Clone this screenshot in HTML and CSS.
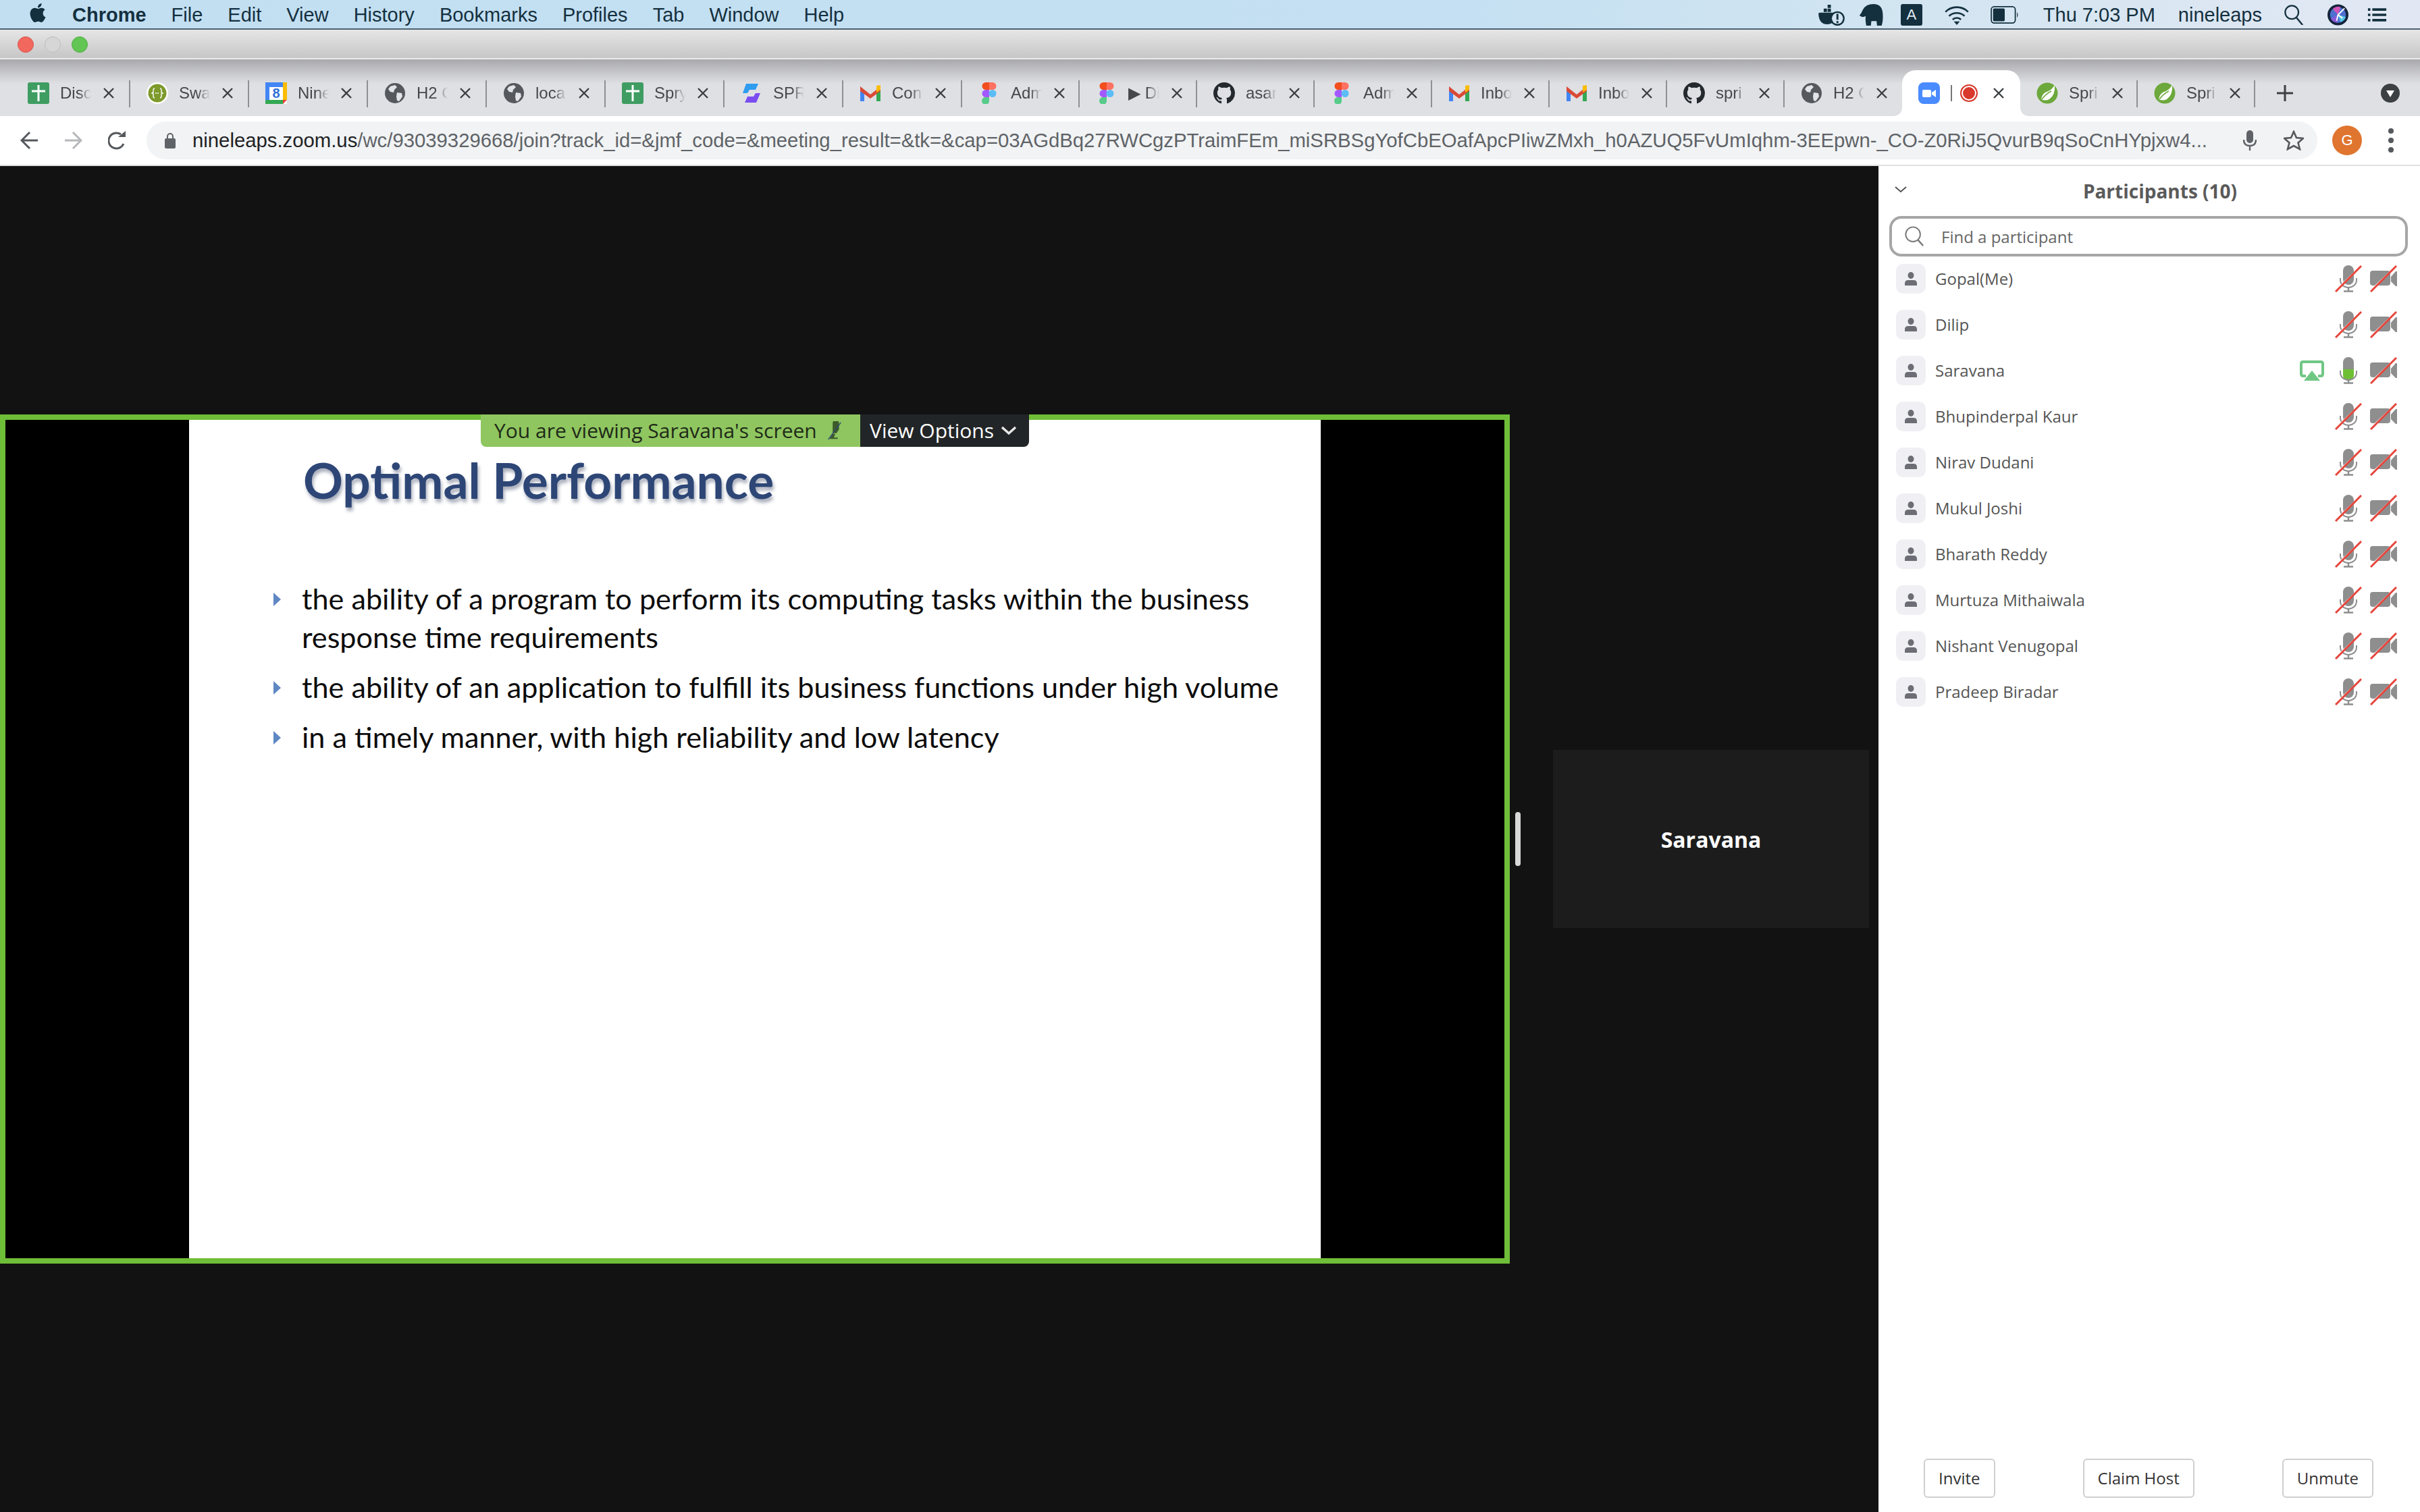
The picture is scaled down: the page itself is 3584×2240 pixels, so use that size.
FILE: index.html
```html
<!DOCTYPE html>
<html lang="en">
<head>
    <meta charset="UTF-8">
    <title>Zoom meeting</title>
    <link rel="stylesheet" href="styles.css">
</head>
<body>
    <svg class="defs" width="0" height="0">
        <symbol id="fav-sheet" viewBox="0 0 32 32"><rect width="32" height="32" rx="3" fill="#3f9d62"/><path d="M16 4v24M6 13h20" stroke="#fff" stroke-width="3"/></symbol>
        <symbol id="fav-swagger" viewBox="0 0 32 32"><circle cx="16" cy="16" r="16" fill="#fff"/><circle cx="16" cy="16" r="13.5" fill="#7d9a2b"/><path d="M12 9q-2 0-2 3v3l-2 1 2 1v3q0 3 2 3M20 9q2 0 2 3v3l2 1-2 1v3q0 3-2 3" fill="none" stroke="#fff" stroke-width="1.4"/><path d="M13 16h6" stroke="#fff" stroke-width="1.6" stroke-dasharray="2 1"/></symbol>
        <symbol id="fav-globe" viewBox="0 0 32 32"><circle cx="16" cy="16" r="15" fill="#55585c"/><path d="M9 6l7-2 3 3-4 4-1 4-5-1-3-4zM19 15l7 1 1 5-5 7-3-1-1-6z" fill="#e3e4e7"/></symbol>
        <symbol id="fav-spr" viewBox="0 0 32 32"><path d="M8 2h18l-4 9H13l-3 5H3z" fill="#2f9cf0"/><path d="M29 16l-6 14H6l4-9h9l3-5z" fill="#7b4df0"/></symbol>
        <symbol id="fav-gmail" viewBox="0 0 32 32"><path d="M1 6v22h6V14z" fill="#4285f4"/><path d="M31 6v22h-6V14z" fill="#34a853"/><path d="M1 6l15 12L31 6v7L16 24 1 13z" fill="#d94b37"/><path d="M25 5l6-1v7l-6 4z" fill="#fbbc04"/></symbol>
        <symbol id="fav-figma" viewBox="0 0 32 32"><path d="M11 0h5v11h-5a5.500 5.500 0 010-11z" fill="#f24e1e"/><path d="M16 0h5a5.500 5.500 0 010 11h-5z" fill="#ff7262"/><path d="M11 11h5v11h-5a5.500 5.500 0 010-11z" fill="#a259ff"/><circle cx="21" cy="16.500" r="5.500" fill="#5cbcf6"/><path d="M11 22h5v5a5.500 5.500 0 11-5-5z" fill="#57cb8a"/></symbol>
        <symbol id="fav-github" viewBox="0 0 16 16"><path fill="#24292e" d="M8 0C3.58 0 0 3.58 0 8c0 3.54 2.29 6.53 5.47 7.59.4.07.55-.17.55-.38 0-.19-.01-.82-.01-1.49-2.01.37-2.53-.49-2.69-.94-.09-.23-.48-.94-.82-1.13-.28-.15-.68-.52-.01-.53.63-.01 1.08.58 1.23.82.72 1.21 1.87.87 2.33.66.07-.52.28-.87.51-1.07-1.78-.2-3.64-.89-3.64-3.95 0-.87.31-1.59.82-2.15-.08-.2-.36-1.02.08-2.12 0 0 .67-.21 2.2.82.64-.18 1.32-.27 2-.27.68 0 1.36.09 2 .27 1.53-1.04 2.2-.82 2.2-.82.44 1.1.16 1.92.08 2.12.51.56.82 1.27.82 2.15 0 3.07-1.87 3.75-3.65 3.95.29.25.54.73.54 1.48 0 1.07-.01 1.93-.01 2.2 0 .21.15.46.55.38A8.013 8.013 0 0016 8c0-4.42-3.58-8-8-8z"/></symbol>
        <symbol id="fav-zoom" viewBox="0 0 32 32"><rect width="32" height="32" rx="8" fill="#4a8cff"/><rect x="6" y="11" width="13" height="11" rx="2" fill="#fff"/><path d="M20 15l6-4v11l-6-4z" fill="#fff"/></symbol>
        <symbol id="fav-spring" viewBox="0 0 32 32"><circle cx="16" cy="16" r="15.500" fill="#6ca83c"/><path d="M27 4q1 15-8 21-6 3-12 0 1-8 8-11 7-2 12-10z" fill="#fff"/><path d="M8 25q6-8 14-12" stroke="#6ca83c" stroke-width="1.500" fill="none"/></symbol>
        <symbol id="tab-x" viewBox="0 0 18 18"><path d="M2 2l14 14M16 2L2 16" stroke="#3c4043" stroke-width="2.400"/></symbol>
        <symbol id="mic-off" viewBox="0 0 40 40"><rect x="12" y="0" width="16" height="29" rx="8" fill="#8e8e8e"/><path d="M8 19v3a12 11 0 0024 0v-3" fill="none" stroke="#8e8e8e" stroke-width="2"/><path d="M20 33v5M13 38.500h14" stroke="#8e8e8e" stroke-width="2.500"/><path d="M3 35L37 3" stroke="#fff" stroke-width="2"/><path d="M1 39L39 1" stroke="#e5453c" stroke-width="3"/></symbol>
        <symbol id="mic-on" viewBox="0 0 40 40"><path d="M12 8a8 8 0 0116 0v10H12z" fill="#8e8e8e"/><path d="M12 18h16v9a8 8 0 01-16 0z" fill="#6fbf35"/><path d="M8 20v3a12 11 0 0024 0v-3" fill="none" stroke="#8e8e8e" stroke-width="2"/><path d="M20 34v4M13 38.500h14" stroke="#8e8e8e" stroke-width="2.500"/></symbol>
        <symbol id="cam-off" viewBox="0 0 40 40"><rect x="0" y="8" width="30" height="22" rx="4" fill="#8e8e8e"/><path d="M31 17l7-8h2v22h-2l-7-7z" fill="#8e8e8e"/><path d="M3 35L37 3" stroke="#fff" stroke-width="2"/><path d="M1 39L39 1" stroke="#e5453c" stroke-width="3"/></symbol>
        <symbol id="person" viewBox="0 0 18 20"><ellipse cx="9" cy="5" rx="4.500" ry="5" fill="#6d6d75"/><path d="M0 20v-3q0-5 5-5h8q5 0 5 5v3z" fill="#6d6d75"/></symbol>
    </svg>

    <header class="menubar">
        <svg class="apple" viewBox="0 0 24 24"><path fill="#14303f" d="M12.152 6.896c-.948 0-2.415-1.078-3.960-1.040-2.040.027-3.910 1.183-4.961 3.014-2.117 3.675-.546 9.103 1.519 12.090 1.013 1.454 2.208 3.090 3.792 3.039 1.520-.065 2.090-.987 3.935-.987 1.831 0 2.350.987 3.960.948 1.637-.026 2.676-1.480 3.676-2.948 1.156-1.688 1.636-3.325 1.662-3.415-.039-.013-3.182-1.221-3.220-4.857-.026-3.040 2.480-4.494 2.597-4.559-1.429-2.090-3.623-2.324-4.390-2.376-2-.156-3.675 1.090-4.610 1.090zM15.530 3.830c.843-1.012 1.400-2.427 1.245-3.830-1.207.052-2.662.805-3.532 1.818-.780.896-1.454 2.338-1.273 3.714 1.338.104 2.715-.688 3.559-1.701"/></svg>
        <nav class="menu">
            <span class="menu-app">Chrome</span>
            <span>File</span><span>Edit</span><span>View</span><span>History</span><span>Bookmarks</span><span>Profiles</span><span>Tab</span><span>Window</span><span>Help</span>
        </nav>
        <div class="status">
            <svg class="st-docker" viewBox="0 0 40 32"><path fill="#14303f" d="M8 6h5v5H8zM14 6h5v5h-5zM14 0h5v5h-5zM2 12h24q2 0 1 3-1 15-14 15Q1 30 0 14q0-2 2-2z"/><circle cx="29" cy="21" r="11" fill="#14303f"/><circle cx="29" cy="21" r="8.500" fill="#d2e4f1"/><path d="M29 14v9M29 25v3" stroke="#14303f" stroke-width="3"/></svg>
            <svg class="st-elephant" viewBox="0 0 42 38"><path fill="#14303f" d="M0 20q3-3 6-10Q11 0 25 0q15 0 16 17 1 12-2 21h-8l-1-8h-9l-1 8H12q-2-10-1-17-6 4-11-1z"/></svg>
            <div class="st-key">A</div>
            <svg class="st-wifi" viewBox="0 0 42 34"><path d="M2 12a27 27 0 0138 0M8 19a19 19 0 0126 0M14 25a10 10 0 0114 0" fill="none" stroke="#14303f" stroke-width="3"/><path d="M21 34l-5-6h10z" fill="#14303f"/></svg>
            <svg class="st-battery" viewBox="0 0 48 30"><rect x="1" y="1" width="41" height="28" rx="5" fill="none" stroke="#14303f" stroke-width="2"/><rect x="4" y="4" width="20" height="22" rx="2" fill="#14303f"/><path d="M45 10q3 5 0 10z" fill="#14303f"/></svg>
            <span class="st-time">Thu 7:03 PM</span>
            <span class="st-user">nineleaps</span>
            <svg class="st-search" viewBox="0 0 30 32"><circle cx="12" cy="12" r="10.500" fill="none" stroke="#14303f" stroke-width="2.400"/><path d="M19 20l10 12" stroke="#14303f" stroke-width="2.600"/></svg>
            <svg class="st-siri" viewBox="0 0 32 32"><circle cx="16" cy="16" r="16" fill="#14243c"/><circle cx="16" cy="16" r="12" fill="#4c6fd0"/><path d="M16 16L8 7a12 12 0 0 1 12-3z" fill="#d055b8"/><path d="M16 16l12 3a12 12 0 0 1-8 8z" fill="#52c6e8"/><path d="M16 16L5 22a12 12 0 0 0 10 6z" fill="#8a5ad8"/><path d="M16 16L26 6M16 16l7 5M16 16l-2 9" stroke="#fff" stroke-width="2"/></svg>
            <svg class="st-list" viewBox="0 0 38 28"><path d="M0 3h5M9 3h29M0 14h5M9 14h29M0 25h5M9 25h29" stroke="#14303f" stroke-width="5"/></svg>
        </div>
    </header>

    <div class="titlebar">
        <span class="light light-red"></span>
        <span class="light light-grey"></span>
        <span class="light light-green"></span>
    </div>

    <div class="tabstrip">
        <div class="tab wide"><svg class="fav"><use href="#fav-sheet"/></svg><span class="tab-title">Disc</span><svg class="tab-close"><use href="#tab-x"/></svg></div>
        <div class="tab wide"><svg class="fav"><use href="#fav-swagger"/></svg><span class="tab-title">Swa</span><svg class="tab-close"><use href="#tab-x"/></svg></div>
        <div class="tab wide">
            <svg class="fav" viewBox="0 0 32 32"><rect width="32" height="32" fill="#fff"/><path d="M0 0h26v7H0z" fill="#4285f4"/><path d="M26 0h6v26h-6z" fill="#fbbc04"/><path d="M0 7h6v19H0z" fill="#4285f4"/><path d="M0 26h26v6H0z" fill="#34a853"/><path d="M26 26h6l-6 6z" fill="#ea4335"/><text x="16" y="23" class="cal-num">8</text></svg>
            <span class="tab-title">Nine</span><svg class="tab-close"><use href="#tab-x"/></svg></div>
        <div class="tab wide"><svg class="fav"><use href="#fav-globe"/></svg><span class="tab-title">H2 C</span><svg class="tab-close"><use href="#tab-x"/></svg></div>
        <div class="tab wide"><svg class="fav"><use href="#fav-globe"/></svg><span class="tab-title">loca</span><svg class="tab-close"><use href="#tab-x"/></svg></div>
        <div class="tab wide"><svg class="fav"><use href="#fav-sheet"/></svg><span class="tab-title">Spry</span><svg class="tab-close"><use href="#tab-x"/></svg></div>
        <div class="tab wide"><svg class="fav"><use href="#fav-spr"/></svg><span class="tab-title">SPR</span><svg class="tab-close"><use href="#tab-x"/></svg></div>
        <div class="tab wide"><svg class="fav"><use href="#fav-gmail"/></svg><span class="tab-title">Cont</span><svg class="tab-close"><use href="#tab-x"/></svg></div>
        <div class="tab"><svg class="fav"><use href="#fav-figma"/></svg><span class="tab-title">Adm</span><svg class="tab-close"><use href="#tab-x"/></svg></div>
        <div class="tab"><svg class="fav"><use href="#fav-figma"/></svg><span class="tab-title">▶ Di</span><svg class="tab-close"><use href="#tab-x"/></svg></div>
        <div class="tab"><svg class="fav"><use href="#fav-github"/></svg><span class="tab-title">asar</span><svg class="tab-close"><use href="#tab-x"/></svg></div>
        <div class="tab"><svg class="fav"><use href="#fav-figma"/></svg><span class="tab-title">Adm</span><svg class="tab-close"><use href="#tab-x"/></svg></div>
        <div class="tab"><svg class="fav"><use href="#fav-gmail"/></svg><span class="tab-title">Inbo</span><svg class="tab-close"><use href="#tab-x"/></svg></div>
        <div class="tab"><svg class="fav"><use href="#fav-gmail"/></svg><span class="tab-title">Inbo</span><svg class="tab-close"><use href="#tab-x"/></svg></div>
        <div class="tab"><svg class="fav"><use href="#fav-github"/></svg><span class="tab-title">spri</span><svg class="tab-close"><use href="#tab-x"/></svg></div>
        <div class="tab no-sep"><svg class="fav"><use href="#fav-globe"/></svg><span class="tab-title">H2 C</span><svg class="tab-close"><use href="#tab-x"/></svg></div>
        <div class="tab active">
            <svg class="fav"><use href="#fav-zoom"/></svg>
            <span class="tab-bar"></span>
            <span class="rec"></span>
            <svg class="tab-close"><use href="#tab-x"/></svg>
        </div>
        <div class="tab"><svg class="fav"><use href="#fav-spring"/></svg><span class="tab-title">Spri</span><svg class="tab-close"><use href="#tab-x"/></svg></div>
        <div class="tab"><svg class="fav"><use href="#fav-spring"/></svg><span class="tab-title">Spri</span><svg class="tab-close"><use href="#tab-x"/></svg></div>
        <svg class="new-tab" viewBox="0 0 26 26"><path d="M13 1v24M1 13h24" stroke="#3c4043" stroke-width="3"/></svg>
        <svg class="tab-search" viewBox="0 0 28 28"><circle cx="14" cy="14" r="14" fill="#3c4043"/><path d="M8 10h12l-6 10z" fill="#fff"/></svg>
    </div>

    <div class="toolbar">
        <div class="nav-btns">
            <svg class="nav-btn" viewBox="0 0 27 28"><path d="M26 14H3M14 2L2 14l12 12" fill="none" stroke="#55585c" stroke-width="3"/></svg>
            <svg class="nav-btn" viewBox="0 0 27 28"><path d="M1 14h23M13 2l12 12-12 12" fill="none" stroke="#b6b7ba" stroke-width="3"/></svg>
            <svg class="nav-btn" viewBox="0 0 27 28"><path d="M23 19A11.500 11.500 0 1119 5" fill="none" stroke="#55585c" stroke-width="3"/><path d="M15 9h11V0z" fill="#55585c"/></svg>
        </div>
        <div class="omnibox">
            <svg class="lock" viewBox="0 0 16 24"><path d="M4 10V6a4 4 0 018 0v4" fill="none" stroke="#5f6368" stroke-width="2"/><rect y="9" width="16" height="15" rx="2" fill="#5f6368"/></svg>
            <div class="url"><span class="url-host">nineleaps.zoom.us</span>/wc/93039329668/join?track_id=&amp;jmf_code=&amp;meeting_result=&amp;tk=&amp;cap=03AGdBq27RWCgzPTraimFEm_miSRBSgYofCbEOafApcPIiwZMxh_h0AZUQ5FvUmIqhm-3EEpwn-_CO-Z0RiJ5QvurB9qSoCnHYpjxw4...</div>
            <svg class="omni-mic" viewBox="0 0 20 30"><rect x="5" y="0" width="10" height="19" rx="5" fill="#5f6368"/><path d="M1 14q0 9 9 9t9-9M10 23v7" fill="none" stroke="#5f6368" stroke-width="2.400"/></svg>
            <svg class="omni-star" viewBox="0 0 30 30"><path d="M15 2l4 9 10 1-7.500 6.500L24 28l-9-5-9 5 2.500-9.500L1 12l10-1z" fill="none" stroke="#55585c" stroke-width="2.600"/></svg>
        </div>
        <div class="profile">G</div>
        <div class="dots"><span></span><span></span><span></span></div>
    </div>

    <main class="meeting">
        <section class="stage">
            <div class="video">
                <div class="banner">
                    <div class="banner-msg">You are viewing Saravana's screen
                        <svg class="banner-mic" viewBox="0 0 24 30"><path d="M9 3a5 5 0 0110 0v10l-4 6H9zM4 28l5-8h4l-2 6h6v2z" fill="#3d5a2a"/><path d="M2 29L22 2" stroke="#2b4a78" stroke-width="1.500"/></svg>
                    </div>
                    <div class="banner-opts">View Options
                        <svg class="banner-chev" viewBox="0 0 24 14"><path d="M2 2l10 9 10-9" fill="none" stroke="#e8e8e8" stroke-width="3.500"/></svg>
                    </div>
                </div>
                <div class="slide">
                    <h1 class="slide-title">Optimal Performance</h1>
                    <ul class="slide-list">
                        <li>the ability of a program to perform its computing tasks within the business response time requirements</li>
                        <li>the ability of an application to fulfill its business functions under high volume</li>
                        <li>in a timely manner, with high reliability and low latency</li>
                    </ul>
                </div>
            </div>
            <div class="handle"></div>
            <div class="thumb">Saravana</div>
        </section>

        <aside class="panel">
            <div class="panel-head">
                <svg class="panel-chev" viewBox="0 0 18 10"><path d="M1 1l8 7 8-7" fill="none" stroke="#555" stroke-width="2"/></svg>
                <span class="panel-title">Participants (10)</span>
            </div>
            <div class="search">
                <svg class="search-icon" viewBox="0 0 30 32"><circle cx="13" cy="13" r="11.500" fill="none" stroke="#777" stroke-width="2"/><path d="M21 22l8 9" stroke="#777" stroke-width="2.500"/></svg>
                <span>Find a participant</span>
            </div>
            <ul class="people">
                <li class="person"><span class="avatar"><svg><use href="#person"/></svg></span><span class="name">Gopal(Me)</span><svg class="ctl"><use href="#mic-off"/></svg><svg class="ctl"><use href="#cam-off"/></svg></li>
                <li class="person"><span class="avatar"><svg><use href="#person"/></svg></span><span class="name">Dilip</span><svg class="ctl"><use href="#mic-off"/></svg><svg class="ctl"><use href="#cam-off"/></svg></li>
                <li class="person"><span class="avatar"><svg><use href="#person"/></svg></span><span class="name">Saravana</span>
                    <svg class="share" viewBox="0 0 36 30"><path d="M9 23H5q-3 0-3-3V5q0-3 3-3h26q3 0 3 3v15q0 3-3 3h-4" fill="none" stroke="#6fc784" stroke-width="4"/><path d="M18 15l12 15H6z" fill="#6fc784"/></svg>
                    <svg class="ctl"><use href="#mic-on"/></svg><svg class="ctl"><use href="#cam-off"/></svg></li>
                <li class="person"><span class="avatar"><svg><use href="#person"/></svg></span><span class="name">Bhupinderpal Kaur</span><svg class="ctl"><use href="#mic-off"/></svg><svg class="ctl"><use href="#cam-off"/></svg></li>
                <li class="person"><span class="avatar"><svg><use href="#person"/></svg></span><span class="name">Nirav Dudani</span><svg class="ctl"><use href="#mic-off"/></svg><svg class="ctl"><use href="#cam-off"/></svg></li>
                <li class="person"><span class="avatar"><svg><use href="#person"/></svg></span><span class="name">Mukul Joshi</span><svg class="ctl"><use href="#mic-off"/></svg><svg class="ctl"><use href="#cam-off"/></svg></li>
                <li class="person"><span class="avatar"><svg><use href="#person"/></svg></span><span class="name">Bharath Reddy</span><svg class="ctl"><use href="#mic-off"/></svg><svg class="ctl"><use href="#cam-off"/></svg></li>
                <li class="person"><span class="avatar"><svg><use href="#person"/></svg></span><span class="name">Murtuza Mithaiwala</span><svg class="ctl"><use href="#mic-off"/></svg><svg class="ctl"><use href="#cam-off"/></svg></li>
                <li class="person"><span class="avatar"><svg><use href="#person"/></svg></span><span class="name">Nishant Venugopal</span><svg class="ctl"><use href="#mic-off"/></svg><svg class="ctl"><use href="#cam-off"/></svg></li>
                <li class="person"><span class="avatar"><svg><use href="#person"/></svg></span><span class="name">Pradeep Biradar</span><svg class="ctl"><use href="#mic-off"/></svg><svg class="ctl"><use href="#cam-off"/></svg></li>
            </ul>
            <div class="panel-foot">
                <button class="foot-btn">Invite</button>
                <button class="foot-btn">Claim Host</button>
                <button class="foot-btn">Unmute</button>
            </div>
        </aside>
    </main>
</body>
</html>
```

FILE: styles.css
```css
* {
    box-sizing: border-box;
}
html, body {
    margin: 0;
    padding: 0;
}
body {
    width: 3584px;
    height: 2240px;
    overflow: hidden;
    display: flex;
    flex-direction: column;
    font-family: "Liberation Sans", Arial, sans-serif;
    background: #121212;
}
.defs {
    position: absolute;
}

/* mac menu bar */
.menubar {
    height: 44px;
    flex: none;
    display: flex;
    align-items: center;
    padding: 2px 0 0 42px;
    border-bottom: 2px solid #4d6272;
    background: linear-gradient(90deg, #c2dff2 0%, #c4e0f2 60%, #d3e5f1 80%, #e2e8f3 100%);
    color: #14303f;
    font-size: 29px;
}
.apple {
    width: 28px;
    height: 34px;
    margin-top: -6px;
}
.menu {
    display: flex;
    gap: 37px;
    margin-left: 37px;
}
.menu-app {
    font-weight: bold;
}
.status {
    margin-left: auto;
    display: flex;
    align-items: center;
    padding-right: 45px;
}
.st-docker { width: 39px; height: 31px; }
.st-elephant { width: 41px; height: 32px; margin-left: 19px; }
.st-key {
    width: 32px;
    height: 32px;
    margin-left: 23px;
    border-radius: 3px;
    background: #14303f;
    color: #e0ecf4;
    font-size: 22px;
    line-height: 32px;
    text-align: center;
}
.st-wifi { width: 42px; height: 30px; margin-left: 30px; }
.st-battery { width: 48px; height: 26px; margin-left: 26px; }
.st-time { margin-left: 33px; }
.st-user { margin-left: 34px; }
.st-search { width: 30px; height: 30px; margin-left: 32px; }
.st-siri { width: 31px; height: 32px; margin-left: 35px; }
.st-list { width: 37px; height: 20px; margin-left: 24px; }

/* window title bar */
.titlebar {
    height: 44px;
    flex: none;
    display: flex;
    align-items: center;
    gap: 16px;
    padding: 2px 0 0 26px;
    background: linear-gradient(#e6e6e6, #c6c6c6);
    border-bottom: 2px solid #ececec;
}
.light {
    width: 24px;
    height: 24px;
    border-radius: 50%;
}
.light-red { background: #f2685f; border: 1px solid #d9534a; }
.light-grey { background: #d6d6d6; border: 1px solid #bdbdbd; }
.light-green { background: #62c554; border: 1px solid #4fae42; }

/* chrome tabs */
.tabstrip {
    height: 84px;
    flex: none;
    display: flex;
    align-items: flex-end;
    padding-left: 17px;
    background: linear-gradient(#a8a8ad 0, #dfe0e4 36px);
}
.tab {
    position: relative;
    width: 174px;
    height: 68px;
    flex: none;
    display: flex;
    align-items: center;
    padding-left: 24px;
}
.tab.wide {
    width: 176px;
}
.tab::after {
    content: "";
    position: absolute;
    right: 0;
    top: 15px;
    height: 40px;
    width: 2px;
    background: #8f9093;
}
.tab.no-sep::after {
    display: none;
}
.fav {
    width: 32px;
    height: 32px;
    flex: none;
}
.cal-num {
    font-size: 20px;
    font-weight: bold;
    fill: #2f6fd6;
    text-anchor: middle;
}
.tab-title {
    width: 46px;
    margin-left: 16px;
    white-space: nowrap;
    font-size: 24px;
    color: #45474a;
    -webkit-mask-image: linear-gradient(90deg, #000 60%, transparent);
    mask-image: linear-gradient(90deg, #000 60%, transparent);
}
.tab-close {
    width: 18px;
    height: 18px;
    flex: none;
    margin-left: 17px;
}
.tab.active {
    width: 175px;
    background: #fff;
    border-radius: 20px 20px 0 0;
}
.tab.active::before,
.tab.active::after {
    content: "";
    display: block;
    position: absolute;
    top: auto;
    bottom: 0;
    width: 12px;
    height: 12px;
}
.tab.active::before {
    left: -12px;
    background: radial-gradient(circle at 0 0, transparent 11.5px, #fff 12px);
}
.tab.active::after {
    right: -12px;
    background: radial-gradient(circle at 100% 0, transparent 11.5px, #fff 12px);
}
.tab-bar {
    width: 2px;
    height: 24px;
    margin-left: 16px;
    background: #777;
}
.rec {
    width: 26px;
    height: 26px;
    margin-left: 12px;
    border-radius: 50%;
    background: #d8392c;
    border: 2px solid #d8392c;
    box-shadow: inset 0 0 0 2px #fff;
}
.tab.active .tab-close {
    margin-left: 22px;
}
.new-tab {
    width: 26px;
    height: 26px;
    margin: 0 0 21px 31px;
}
.tab-search {
    width: 28px;
    height: 28px;
    margin: 0 30px 20px auto;
}

/* chrome toolbar */
.toolbar {
    height: 74px;
    flex: none;
    display: flex;
    align-items: center;
    padding-left: 30px;
    background: #fff;
    border-bottom: 2px solid #e0e0e0;
}
.nav-btns {
    display: flex;
    gap: 38px;
}
.nav-btn {
    width: 27px;
    height: 28px;
}
.omnibox {
    width: 3215px;
    height: 56px;
    margin-left: 30px;
    display: flex;
    align-items: center;
    padding-left: 27px;
    border-radius: 28px;
    background: #f1f3f4;
}
.lock {
    width: 16px;
    height: 24px;
    flex: none;
}
.url {
    width: 3000px;
    margin-left: 25px;
    flex: none;
    white-space: nowrap;
    font-size: 29.3px;
    color: #5f6368;
}
.url-host {
    color: #202124;
}
.omni-mic {
    width: 20px;
    height: 30px;
    margin-left: 37px;
    flex: none;
}
.omni-star {
    width: 30px;
    height: 30px;
    margin-left: 40px;
    flex: none;
}
.profile {
    width: 44px;
    height: 44px;
    margin-left: 22px;
    border-radius: 50%;
    background: #e0752f;
    color: #fff;
    font-size: 22px;
    line-height: 44px;
    text-align: center;
}
.dots {
    margin-left: 39px;
    display: flex;
    flex-direction: column;
    gap: 6px;
}
.dots span {
    width: 8px;
    height: 8px;
    border-radius: 50%;
    background: #55585c;
}

/* meeting area */
.meeting {
    flex: 1;
    display: flex;
    min-height: 0;
}
.stage {
    width: 2782px;
    flex: none;
    display: flex;
    align-items: center;
    background: #121212;
}
.video {
    position: relative;
    width: 2236px;
    height: 1258px;
    flex: none;
    border: 8px solid #6fbe38;
    background: #000;
    display: flex;
    justify-content: center;
}
.banner {
    position: absolute;
    left: 704px;
    top: -8px;
    height: 48px;
    display: flex;
    font-family: "Open Sans", sans-serif;
    font-size: 30px;
    line-height: 48px;
}
.banner-msg {
    width: 562px;
    padding-left: 20px;
    display: flex;
    align-items: center;
    gap: 14px;
    background: #8fc660;
    color: #1f2a18;
    border-radius: 0 0 0 8px;
    white-space: nowrap;
}
.banner-mic {
    width: 24px;
    height: 28px;
}
.banner-opts {
    width: 250px;
    padding-left: 14px;
    display: flex;
    align-items: center;
    gap: 10px;
    background: #222527;
    color: #fff;
    border-radius: 0 0 8px 0;
    white-space: nowrap;
}
.banner-chev {
    width: 24px;
    height: 14px;
}
.slide {
    width: 1676px;
    height: 100%;
    background: #fff;
    padding-left: 169px;
    font-family: Lato, sans-serif;
}
.slide-title {
    margin: 44px 0 0;
    font-size: 73px;
    line-height: 90px;
    font-weight: bold;
    color: #2d4676;
    text-shadow: 2px 5px 5px rgba(60, 70, 100, 0.45);
}
.slide-list {
    list-style: none;
    margin: 102px 0 0 -2px;
    padding: 0;
    width: 1520px;
    font-size: 43.2px;
    line-height: 57px;
    color: #0c0c0c;
}
.slide-list li {
    position: relative;
    margin-bottom: 17px;
}
.slide-list li::before {
    content: "";
    position: absolute;
    left: -42px;
    top: 20px;
    border-left: 11px solid #5f87c3;
    border-top: 10px solid transparent;
    border-bottom: 10px solid transparent;
}
.handle {
    width: 8px;
    height: 80px;
    flex: none;
    margin-left: 8px;
    border-radius: 4px;
    background: #d8d8d8;
}
.thumb {
    width: 468px;
    height: 264px;
    flex: none;
    margin-left: 48px;
    display: flex;
    align-items: center;
    justify-content: center;
    background: #1c1c1c;
    color: #fff;
    font-family: "Open Sans", sans-serif;
    font-weight: bold;
    font-size: 32px;
}

/* participants panel */
.panel {
    flex: 1;
    display: flex;
    flex-direction: column;
    background: #fff;
    font-family: "Open Sans", sans-serif;
    color: #555;
}
.panel-head {
    position: relative;
    height: 74px;
    flex: none;
    display: flex;
    align-items: center;
    justify-content: center;
    padding-left: 32px;
}
.panel-chev {
    position: absolute;
    left: 24px;
    top: 30px;
    width: 18px;
    height: 10px;
}
.panel-title {
    font-size: 28px;
    font-weight: bold;
    color: #5a5a5a;
}
.search {
    height: 60px;
    flex: none;
    margin: 0 18px 0 16px;
    display: flex;
    align-items: center;
    gap: 25px;
    padding-left: 18px;
    border: 4px solid #a6a6a6;
    border-radius: 18px;
    font-size: 24px;
    color: #666;
}
.search-icon {
    width: 30px;
    height: 30px;
}
.people {
    list-style: none;
    margin: -1px 0 0;
    padding: 0;
}
.person {
    height: 68px;
    display: flex;
    align-items: center;
    padding: 0 34px 0 26px;
    font-size: 24px;
}
.avatar {
    width: 44px;
    height: 44px;
    flex: none;
    display: flex;
    align-items: center;
    justify-content: center;
    border-radius: 10px;
    background: #f0f0f4;
}
.avatar svg {
    width: 18px;
    height: 20px;
}
.name {
    flex: 1;
    margin-left: 14px;
    padding-bottom: 2px;
}
.share {
    width: 36px;
    height: 30px;
    margin-right: 4px;
}
.ctl {
    width: 40px;
    height: 40px;
    margin-left: 12px;
}
.panel-foot {
    margin-top: auto;
    display: flex;
    justify-content: space-between;
    padding: 0 69px 21px 67px;
}
.foot-btn {
    height: 58px;
    padding: 0 20px 2px;
    background: #fff;
    border: 2px solid #cfcfcf;
    border-radius: 6px;
    font-family: "Open Sans", sans-serif;
    font-size: 24px;
    color: #333;
}
```
